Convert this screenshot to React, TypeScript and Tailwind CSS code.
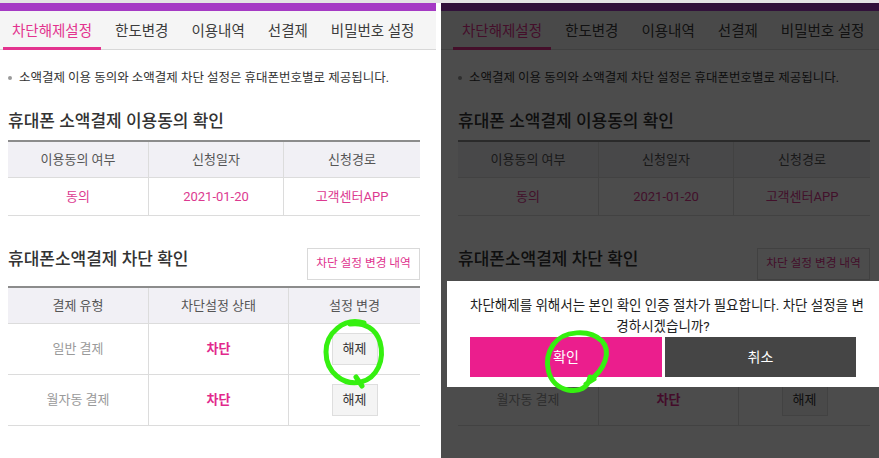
import React from "react";

const tabs = ["차단해제설정", "한도변경", "이용내역", "선결제", "비밀번호 설정"];

function Page({ shift }: { shift: boolean }) {
  return (
    <div className="w-full">
      <div className="h-[8px] bg-[#a53ac4]" />
      <div
        className={
          shift
            ? "h-[39px] bg-[#f5f5f5] border-b border-[#d8d8d8] flex pl-[12px] gap-[5px]"
            : "h-[39px] bg-[#f5f5f5] border-b border-[#d8d8d8] flex pl-[3px] gap-[5px]"
        }
      >
        {tabs.map((t, i) => (
          <div
            key={t}
            className={
              i === 0
                ? "relative px-[9px] pt-[4px] flex items-center text-[14.5px] text-[#e3338e] whitespace-nowrap"
                : "relative px-[9px] pt-[4px] flex items-center text-[14.5px] text-[#3c3c3c] whitespace-nowrap"
            }
          >
            {t}
            {i === 0 && (
              <div className="absolute left-0 right-0 bottom-[-1px] h-[3px] bg-[#e3338e]" />
            )}
          </div>
        ))}
      </div>
      <div className={shift ? "pl-[17px] w-[429px]" : "pl-[8px] w-[420px]"}>
        <div className="pt-[19px] flex items-center text-[12.5px] leading-[18px] text-[#333] whitespace-nowrap">
          <span className="w-[4px] h-[4px] rounded-full bg-[#9a9a9a] mr-[7px]" />
          소액결제 이용 동의와 소액결제 차단 설정은 휴대폰번호별로 제공됩니다.
        </div>
        <div className="mt-[22px] text-[17px] leading-[24px] font-medium text-[#333] whitespace-nowrap">
          휴대폰 소액결제 이용동의 확인
        </div>
        <div className="mt-[7px] w-[412px] border-t-2 border-[#8c8c8c] grid grid-cols-[140px_135px_137px] text-[13px]">
          <div className="h-[36px] bg-[#f1f0f5] border-b border-[#dcdcdc] flex items-center justify-center text-[#555]">이용동의 여부</div>
          <div className="h-[36px] bg-[#f1f0f5] border-b border-l border-[#dcdcdc] flex items-center justify-center text-[#555]">신청일자</div>
          <div className="h-[36px] bg-[#f1f0f5] border-b border-l border-[#dcdcdc] flex items-center justify-center text-[#555]">신청경로</div>
          <div className="h-[38px] border-b border-[#dcdcdc] flex items-center justify-center text-[#dc3a90]">동의</div>
          <div className="h-[38px] border-b border-l border-[#dcdcdc] flex items-center justify-center text-[#dc3a90]">2021-01-20</div>
          <div className="h-[38px] border-b border-l border-[#dcdcdc] flex items-center justify-center text-[#dc3a90]">고객센터APP</div>
        </div>
        <div className="mt-[31px] w-[412px] flex justify-between items-start">
          <div className="text-[17px] leading-[24px] font-medium text-[#333] whitespace-nowrap">
            휴대폰소액결제 차단 확인
          </div>
          <div className="mt-[1px] h-[32px] w-[113px] border border-[#d9d9d9] flex items-center justify-center text-[11.7px] text-[#e0338e] whitespace-nowrap">
            차단 설정 변경 내역
          </div>
        </div>
        <div className="mt-[6px] w-[412px] border-t-2 border-[#8c8c8c] grid grid-cols-[140px_140px_132px] text-[13px]">
          <div className="h-[36px] bg-[#f1f0f5] border-b border-[#dcdcdc] flex items-center justify-center text-[#555]">결제 유형</div>
          <div className="h-[36px] bg-[#f1f0f5] border-b border-l border-[#dcdcdc] flex items-center justify-center text-[#555]">차단설정 상태</div>
          <div className="h-[36px] bg-[#f1f0f5] border-b border-l border-[#dcdcdc] flex items-center justify-center text-[#555]">설정 변경</div>
          {["일반 결제", "월자동 결제"].map((r) => (
            <React.Fragment key={r}>
              <div className="h-[51px] border-b border-[#dcdcdc] flex items-center justify-center text-[#9a9a9a]">{r}</div>
              <div className="h-[51px] border-b border-l border-[#dcdcdc] flex items-center justify-center text-[#e2288c] font-bold">차단</div>
              <div className="h-[51px] border-b border-l border-[#dcdcdc] flex items-center justify-center">
                <div className="w-[46px] h-[32px] bg-[#f4f4f4] border border-[#dedede] flex items-center justify-center text-[#333]">해제</div>
              </div>
            </React.Fragment>
          ))}
        </div>
      </div>
    </div>
  );
}

export default function App() {
  return (
    <div className="relative w-[879px] h-[458px] bg-white overflow-hidden font-['Roboto','Noto_Sans_CJK_KR',sans-serif]">
      <div className="h-[3px] bg-[#e4e4e4]" />
      <div className="flex h-[455px]">
        <div className="w-[436px] h-full overflow-hidden bg-white">
          <Page shift={false} />
        </div>
        <div className="w-[5px] bg-white" />
        <div className="relative w-[438px] h-full overflow-hidden bg-white">
          <Page shift={true} />
          <div className="absolute inset-0 bg-black/70" />
          <div className="absolute left-[6px] top-[278px] w-[432px] bg-white px-[23px] pt-[14px] pb-[10px]">
            <div className="text-center text-[13.5px] leading-[21px] text-[#222] whitespace-nowrap">
              차단해제를 위해서는 본인 확인 인증 절차가 필요합니다. 차단 설정을 변
              <br />
              경하시겠습니까?
            </div>
            <div className="flex gap-[3px] h-[40px]">
              <div className="w-[192px] bg-[#eb1e8d] flex items-center justify-center text-white text-[14px]">확인</div>
              <div className="flex-1 bg-[#454545] flex items-center justify-center text-white text-[14px]">취소</div>
            </div>
          </div>
        </div>
      </div>
      <svg className="absolute left-0 top-0 pointer-events-none" width="879" height="458" viewBox="0 0 879 458">
        <path
          d="M364 323 C344 317 326 333 326 352 C326 372 343 386 361 382 C377 378 385 360 380 342 C376 329 365 322 350 324 M356 377 L362 386"
          fill="none"
          stroke="#35f010"
          strokeWidth="5"
          strokeLinecap="round"
        />
        <path
          d="M590 380 C604 370 612 352 602 341 C590 329 563 330 553 345 C543 360 546 385 568 390 C580 392 588 388 590 377 M586 384 L594 379"
          fill="none"
          stroke="#35f010"
          strokeWidth="5"
          strokeLinecap="round"
        />
      </svg>
    </div>
  );
}
